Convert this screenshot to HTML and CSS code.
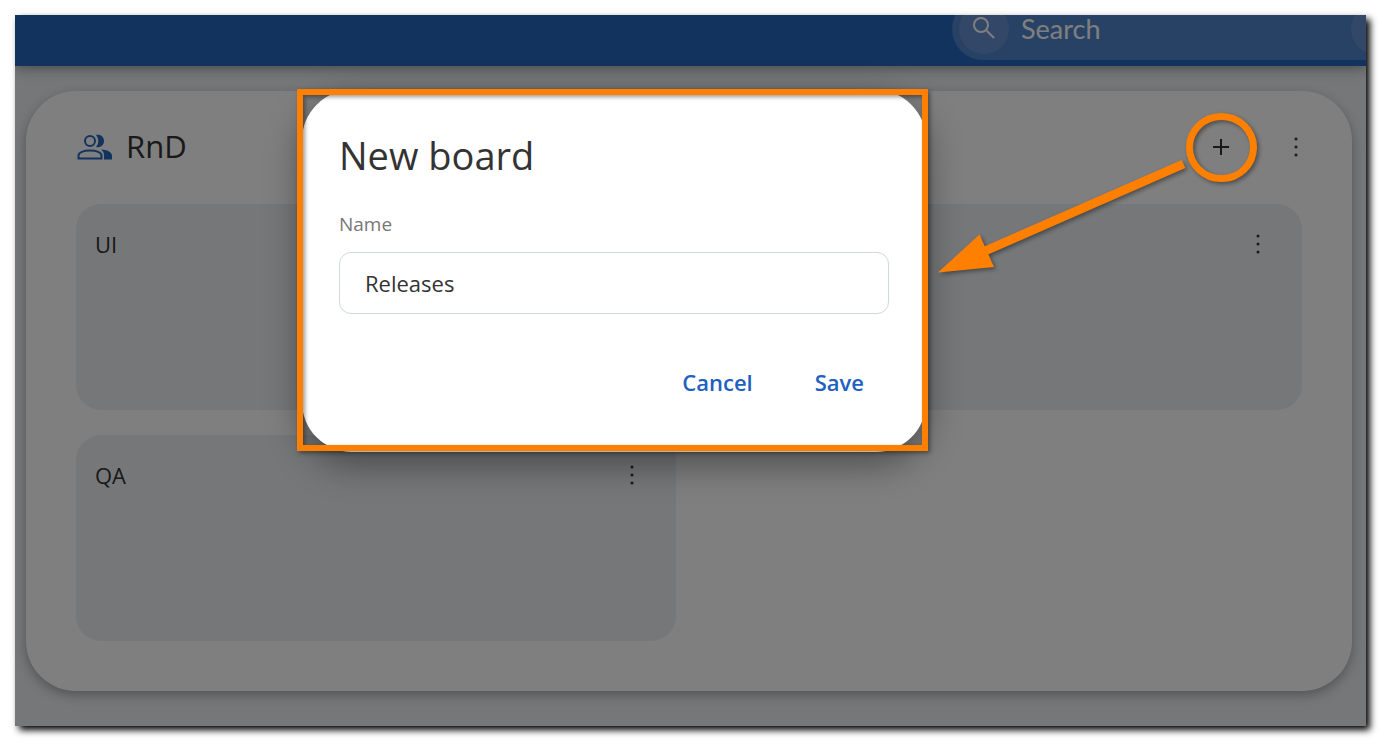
FILE: index.html
```html
<!DOCTYPE html>
<html lang="en">
<head>
    <meta charset="UTF-8">
    <meta name="viewport" content="width=device-width, initial-scale=1.0">
    <title>Boards</title>
    <link rel="stylesheet" href="styles.css">
</head>
<body>

<div class="app">
    <header class="topbar">
        <div class="search">
            <button class="search-btn" type="button" aria-label="Run search">
                <svg width="24" height="24" viewBox="0 0 24 24" fill="none" stroke="currentColor" stroke-width="2">
                    <circle cx="9" cy="8" r="7"/>
                    <path d="M14 13l8 8"/>
                </svg>
            </button>
            <input class="search-input" type="search" placeholder="Search" aria-label="Search">
            <button class="search-btn" type="button" aria-label="Search options"></button>
        </div>
    </header>

    <main class="panel">
        <div class="panel-head">
            <svg class="team-icon" width="37" height="26" viewBox="0 0 37 26">
                <circle cx="14" cy="7" r="5" fill="none" stroke="currentColor" stroke-width="2"/>
                <path d="M20 1c4.500-1 8 1.800 8 6s-3.500 7-8 6c3-3.500 3-8.500 0-12z" fill="currentColor"/>
                <path d="M2.500 24.500v-3c0-3 5-5 11.500-5s11.500 2 11.500 5v3z" fill="none" stroke="currentColor" stroke-width="2"/>
                <path d="M25 15.500c6 .3 11 2.500 11 6v4h-8v-4.500c0-2.300-1-4-3-5.500z" fill="currentColor"/>
            </svg>
            <h1>RnD</h1>
            <button class="icon-btn push" type="button" aria-label="Add board">
                <svg width="18" height="18" viewBox="0 0 18 18" stroke="currentColor" stroke-width="2"><path d="M1 9h16M9 1v16"/></svg>
            </button>
            <button class="icon-btn" type="button" aria-label="Group menu">
                <svg width="4" height="20" viewBox="0 0 4 20" fill="currentColor"><circle cx="2" cy="2" r="1.500"/><circle cx="2" cy="10" r="1.500"/><circle cx="2" cy="18" r="1.500"/></svg>
            </button>
        </div>

        <div class="boards">
            <article class="board">
                <h2>UI</h2>
                <button class="icon-btn" type="button" aria-label="Board menu">
                    <svg width="4" height="20" viewBox="0 0 4 20" fill="currentColor"><circle cx="2" cy="2" r="1.500"/><circle cx="2" cy="10" r="1.500"/><circle cx="2" cy="18" r="1.500"/></svg>
                </button>
            </article>
            <article class="board">
                <button class="icon-btn push" type="button" aria-label="Board menu">
                    <svg width="4" height="20" viewBox="0 0 4 20" fill="currentColor"><circle cx="2" cy="2" r="1.500"/><circle cx="2" cy="10" r="1.500"/><circle cx="2" cy="18" r="1.500"/></svg>
                </button>
            </article>
            <article class="board">
                <h2>QA</h2>
                <button class="icon-btn" type="button" aria-label="Board menu">
                    <svg width="4" height="20" viewBox="0 0 4 20" fill="currentColor"><circle cx="2" cy="2" r="1.500"/><circle cx="2" cy="10" r="1.500"/><circle cx="2" cy="18" r="1.500"/></svg>
                </button>
            </article>
        </div>
    </main>

    <div class="backdrop"></div>

    <form class="dialog" role="dialog" aria-labelledby="dialogTitle">
        <h2 id="dialogTitle">New board</h2>
        <label for="boardName">Name</label>
        <input type="text" id="boardName" value="Releases">
        <div class="actions">
            <button type="button">Cancel</button>
            <button type="button">Save</button>
        </div>
    </form>

    <!-- callout: box round the dialog, arrow from the add button -->
    <svg class="callout" width="1351" height="711" viewBox="0 0 1351 711" fill="none" stroke="#ff8000">
        <rect x="285" y="77" width="625" height="356" stroke-width="6"/>
        <ellipse cx="1206.500" cy="132.500" rx="32" ry="31" stroke-width="7"/>
        <path d="M1168.500 149L970 236" stroke-width="9"/>
        <path d="M923 257.500L964.500 219.500L979 252z" fill="#ff8000" stroke="none"/>
    </svg>
</div>

</body>
</html>
```

FILE: styles.css
```css
* {
    box-sizing: border-box;
}

body {
    margin: 0;
    background-color: #fff;
    color: #333;
    font-family: "Open Sans", "Noto Sans", sans-serif;
}

h1, h2 {
    margin: 0;
    font-weight: 400;
}

button {
    border: none;
    background: none;
    padding: 0;
    font-family: inherit;
    color: inherit;
    cursor: pointer;
}

.app {
    position: relative;
    margin: 15px 27px 27px 15px;
    padding-bottom: 35px;
    overflow: hidden;
    background-color: #ebeef2;
    box-shadow: 4px 4px 7px #000;
}

/* top bar */
.topbar {
    display: flex;
    align-items: flex-end;
    justify-content: flex-end;
    height: 51px;
    padding-bottom: 6px;
    background-color: #2466ba;
    box-shadow: 0 2px 12px rgba(0, 0, 0, 0.4);
}

.search {
    display: flex;
    flex-shrink: 0;
    align-items: center;
    gap: 12px;
    width: 456px;
    height: 62px;
    margin-right: -42px;
    padding: 0 7px;
    border-radius: 31px;
    background-color: #5084cc;
}

.search-btn {
    display: flex;
    flex-shrink: 0;
    align-items: center;
    justify-content: center;
    width: 50px;
    height: 50px;
    border-radius: 50%;
    background-color: #668fd0;
    color: #fff;
}

.search-input {
    flex: 1;
    min-width: 0;
    padding: 0 0 2px;
    border: none;
    background: none;
    font-family: Lato, sans-serif;
    font-size: 27px;
    color: #fff;
}

.search-input::placeholder {
    color: #fff;
}

/* group panel */
.panel {
    margin: 25px 14px 0 11px;
    border-radius: 50px;
    background-color: #fff;
    box-shadow: 0 4px 12px rgba(0, 0, 0, 0.3);
}

.panel-head {
    display: flex;
    align-items: center;
    padding: 31px 31px 32px 50px;
}

.panel-head h1 {
    margin-left: 13px;
    padding-bottom: 2px;
    font-size: 31px;
}

.team-icon {
    color: #2466ba;
}

.icon-btn {
    display: flex;
    align-items: center;
    justify-content: center;
    width: 50px;
    height: 50px;
}

.icon-btn + .icon-btn {
    margin-left: 25px;
}

.push {
    margin-left: auto;
}

.boards {
    display: grid;
    grid-template-columns: 1fr 1fr;
    grid-auto-rows: 206px;
    gap: 25px 26px;
    padding: 0 50px 50px;
}

.board {
    display: flex;
    align-items: flex-start;
    justify-content: space-between;
    padding: 15px 19px;
    border-radius: 25px;
    background-color: #ebeef2;
}

.board h2 {
    font-size: 22px;
    line-height: 50px;
}

/* dialog */
.backdrop {
    position: absolute;
    inset: 0;
    background-color: rgba(0, 0, 0, 0.5);
}

.dialog {
    position: absolute;
    top: 75px;
    left: 287px;
    width: 624px;
    padding: 37px 37px 46px;
    border-radius: 50px;
    background-color: #fff;
    box-shadow: 0 12px 36px rgba(0, 0, 0, 0.4);
}

.dialog h2 {
    font-size: 38px;
    line-height: 56px;
}

.dialog label {
    display: block;
    margin: 27px 0 14px;
    font-size: 19px;
    line-height: 28px;
    color: #777;
}

.dialog input {
    display: block;
    width: 100%;
    height: 62px;
    padding: 0 25px;
    border: 1px solid #cfd8dc;
    border-radius: 12px;
    font-family: inherit;
    font-size: 22px;
    color: #333;
}

.actions {
    display: flex;
    justify-content: flex-end;
    gap: 12px;
    margin-top: 44px;
}

.actions button {
    height: 48px;
    padding: 0 25px;
    font-size: 22px;
    font-weight: 600;
    color: #2060c0;
}

.callout {
    position: absolute;
    top: 0;
    left: 0;
    pointer-events: none;
    filter: drop-shadow(2px 2px 2px rgba(0, 0, 0, 0.4));
}
```
